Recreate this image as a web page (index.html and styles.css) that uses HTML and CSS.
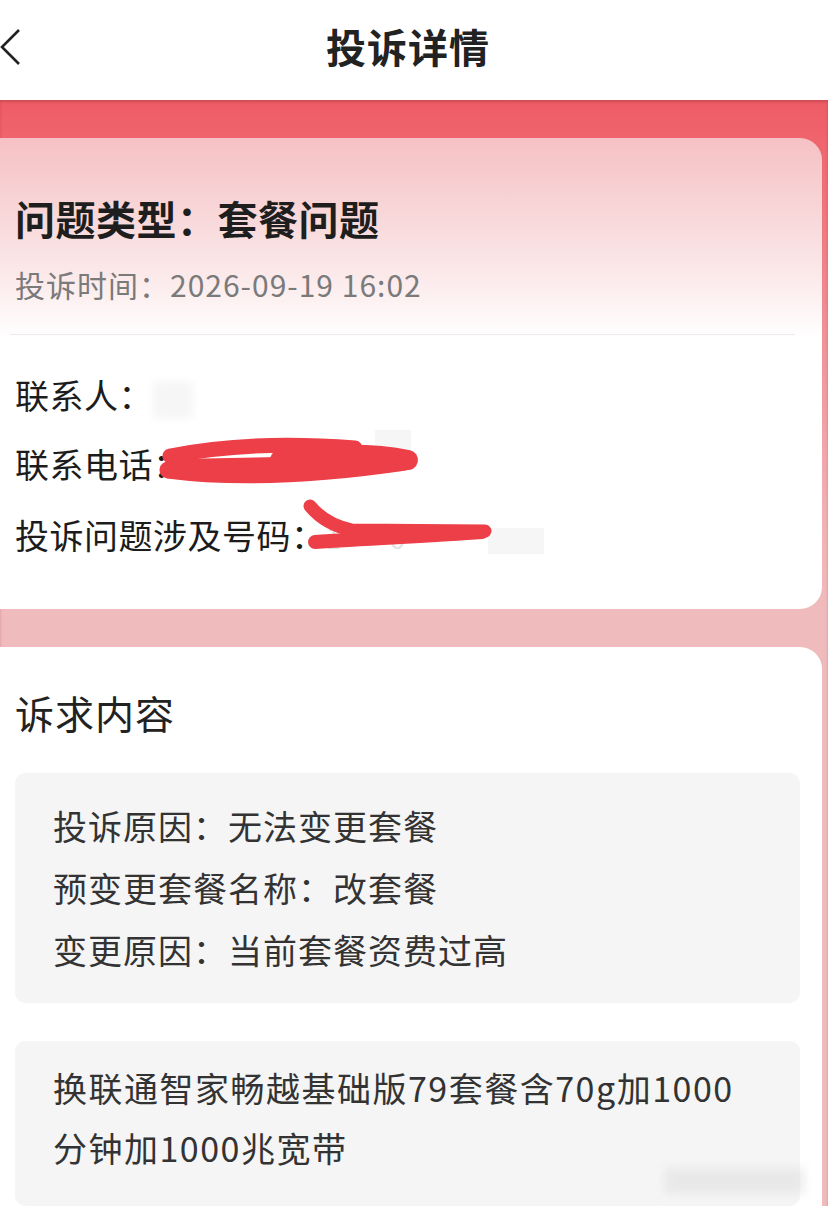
FILE: index.html
```html
<!DOCTYPE html>
<html>
  <head>
    <meta charset="UTF-8" />
    <title>投诉详情</title>
    <link rel="stylesheet" href="styles.css">
  </head>
  <body>
    <div class="header">
      <a href="#" class="back">
        <svg width="24" height="40" viewBox="0 0 24 40">
          <polyline points="19,2 2,19 19,36" fill="none" stroke="#222" stroke-width="2.6" stroke-linejoin="miter" />
        </svg>
      </a>
      <div class="title">投诉详情</div>
    </div>
    <div class="content">
      <div class="card card-info">
        <div class="type">问题类型：套餐问题</div>
        <div class="time">投诉时间：2026-09-19 16:02</div>
        <div class="divider"></div>
        <div class="rows">
          <div class="row">联系人：<span class="blur-bit"></span></div>
          <div class="row">联系电话：<span class="ghost">1 &nbsp; &nbsp; &nbsp; &nbsp; 02</span></div>
          <div class="row">投诉问题涉及号码：<span class="ghost">1 &nbsp; &nbsp; &nbsp; 6</span></div>
        </div>
        <!-- 涂抹 -->
        <svg class="scribble" width="580" height="220" viewBox="0 0 580 220">
          <rect x="395" y="92" width="36" height="22" fill="#f4f4f4" opacity="0.8" />
          <rect x="508" y="190" width="56" height="26" fill="#f4f4f4" opacity="0.8" />
          <g fill="none" stroke="#ec3f48" stroke-linecap="round" stroke-linejoin="round">
            <path d="M190 118 C 240 108, 300 104, 375 110" stroke-width="15" />
            <path d="M188 132 C 250 140, 330 138, 425 124" stroke-width="17" />
            <path d="M300 122 C 340 116, 390 114, 428 122" stroke-width="20" />
            <path d="M200 126 L 300 124" stroke-width="10" />
            <path d="M330 168 C 340 180, 352 188, 372 192 L 505 193" stroke-width="13" />
            <path d="M335 204 C 390 200, 450 198, 502 194" stroke-width="14" />
            <path d="M370 198 L 460 196" stroke-width="10" />
          </g>
        </svg>
      </div>
      <div class="card card-demand">
        <div class="section-title">诉求内容</div>
        <div class="box">
          <div class="line">投诉原因：无法变更套餐</div>
          <div class="line">预变更套餐名称：改套餐</div>
          <div class="line">变更原因：当前套餐资费过高</div>
        </div>
        <div class="box box-note">换联通智家畅越基础版79套餐含70g加1000分钟加1000兆宽带</div>
        <div class="watermark"></div>
      </div>
    </div>
  </body>
</html>
```
FILE: styles.css
```css
html, body {
  margin: 0;
  padding: 0;
}
body {
  width: 828px;
  height: 1213px;
  overflow: hidden;
  background: #fff;
  font-family: "Noto Sans CJK SC", "Noto Sans", sans-serif;
  color: #222;
}
.header {
  height: 92px;
  padding-bottom: 8px;
  display: flex;
  align-items: center;
  justify-content: center;
  position: relative;
  background: #fff;
}
.back {
  position: absolute;
  left: 0;
  top: 28px;
}
.title {
  font-size: 40px;
  font-weight: 700;
  color: #222;
  letter-spacing: 1px;
  margin-left: -12px;
}
.content {
  background: linear-gradient(180deg, #ee5c66 0, #f0646d 40px, #f18f95 220px, #f1b2b5 420px, #f0bbbd 510px, #f0bbbd 100%);
  padding-top: 38px;
  box-shadow: inset 0 2px 3px rgba(120, 20, 30, 0.25);
}
.card {
  position: relative;
  margin: 0 6px 0 -20px;
  padding: 0 22px 0 35px;
  border-radius: 22px;
  background: #fff;
}
.card-info {
  background: linear-gradient(180deg, #f5c1c4 0, #f8d5d7 70px, #fcedee 150px, #fff 200px);
  padding-top: 52px;
  padding-bottom: 49px;
}
.type {
  font-size: 40px;
  font-weight: 700;
  line-height: 56px;
  letter-spacing: 0.5px;
  color: #1e1e1e;
}
.time {
  font-size: 30px;
  line-height: 44px;
  letter-spacing: 1px;
  color: #7a7a7a;
  margin-top: 16px;
}
.divider {
  height: 1px;
  background: #ececec;
  margin: 28px 5px 0 -5px;
}
.rows {
  margin-top: 37px;
  display: flex;
  flex-direction: column;
  gap: 23px;
}
.row {
  font-size: 34px;
  line-height: 46px;
  letter-spacing: 0.5px;
  color: #1c1c1c;
}
.ghost {
  color: #e2e2e2;
  font-size: 28px;
}
.blur-bit {
  display: inline-block;
  width: 40px;
  height: 36px;
  vertical-align: middle;
  background: #f6f6f6;
  filter: blur(4px);
}
.scribble {
  position: absolute;
  left: 0;
  top: 200px;
}
.card-demand {
  margin-top: 38px;
  padding-top: 39px;
  border-radius: 22px 22px 0 0;
}
.section-title {
  font-size: 39px;
  line-height: 52px;
  letter-spacing: 1px;
  color: #222;
}
.box {
  margin-top: 35px;
  background: #f5f5f6;
  border-radius: 10px;
  padding: 22px 50px 22px 38px;
  font-size: 34px;
  letter-spacing: 1px;
  color: #333;
}
.line {
  line-height: 62px;
}
.box-note {
  margin-top: 38px;
  padding-top: 17px;
  padding-bottom: 28px;
  letter-spacing: 1.5px;
  line-height: 60px;
}
.watermark {
  position: absolute;
  right: 18px;
  bottom: 12px;
  width: 140px;
  height: 26px;
  background: #e6e6e6;
  filter: blur(5px);
  opacity: 0.8;
}
```
